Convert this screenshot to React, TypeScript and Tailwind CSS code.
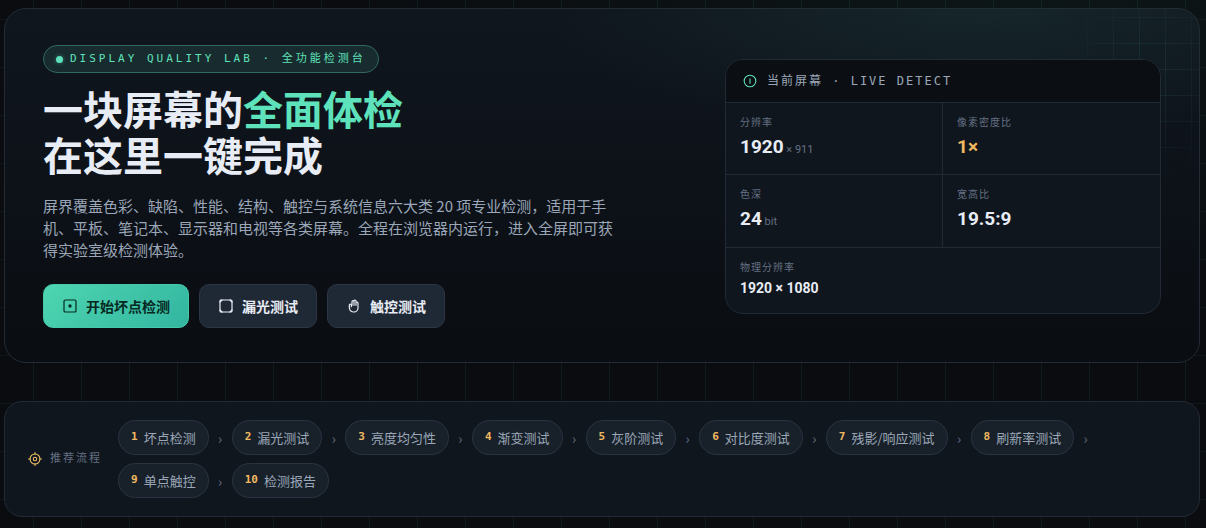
import type { ReactNode } from "react";

const MONO = "font-['DejaVu_Sans_Mono','Noto_Sans_CJK_SC',monospace]";
const NUM = "font-[Roboto,'Noto_Sans_CJK_SC',sans-serif]";

function Icon({ size, className, children }: { size: "sm" | "md"; className?: string; children: ReactNode }) {
  return (
    <svg
      viewBox="0 0 24 24"
      fill="none"
      stroke="currentColor"
      strokeWidth="1.8"
      strokeLinecap="round"
      strokeLinejoin="round"
      aria-hidden="true"
      className={`${size === "sm" ? "size-3.5" : "size-4"} shrink-0 ${className ?? ""}`}
    >
      {children}
    </svg>
  );
}

const actions = [
  {
    label: "开始坏点检测",
    primary: true,
    icon: (
      <>
        <rect x="3" y="3" width="18" height="18" rx="2" />
        <circle cx="12" cy="12" r="1.6" fill="currentColor" />
      </>
    ),
  },
  {
    label: "漏光测试",
    primary: false,
    icon: (
      <>
        <rect x="3" y="3" width="18" height="18" rx="1.5" />
        <path d="M3 6 6 3M18 3l3 3M21 18l-3 3M6 21l-3-3" />
      </>
    ),
  },
  {
    label: "触控测试",
    primary: false,
    icon: (
      <path d="M9 11V5.5a1.5 1.5 0 0 1 3 0V11m0-1V4.500a1.500 1.500 0 0 1 3 0V11m0-3.500a1.500 1.500 0 0 1 3 0V15a6 6 0 0 1-6 6h-1a6 6 0 0 1-5-3l-1-3v-4.500a1.500 1.500 0 0 1 3 0V13" />
    ),
  },
];

const steps = [
  "坏点检测",
  "漏光测试",
  "亮度均匀性",
  "渐变测试",
  "灰阶测试",
  "对比度测试",
  "残影/响应测试",
  "刷新率测试",
  "单点触控",
  "检测报告",
];

function Stat({ label, className, children }: { label: string; className?: string; children: ReactNode }) {
  return (
    <div className={`border-[#222a36] px-3.5 pt-3 ${className ?? ""}`}>
      <dt className={`${MONO} text-[10px] leading-4 tracking-[1px] text-[#647084]`}>{label}</dt>
      {children}
    </div>
  );
}

export default function App() {
  return (
    <div className="min-h-screen bg-[#0a0c10] bg-[radial-gradient(ellipse_700px_300px_at_85%_0%,rgba(40,110,85,0.1),transparent),linear-gradient(to_right,rgba(94,234,190,0.07)_1px,transparent_1px),linear-gradient(to_bottom,rgba(94,234,190,0.06)_1px,transparent_1px)] bg-[length:auto,48px_48px,48px_48px] bg-[position:0_0,33px_0,0_19px] font-['Noto_Sans_CJK_SC',sans-serif] text-[#e8ecf5]">
      <main className="flex flex-col gap-[38px] pt-2 pr-1.5 pb-[11px] pl-1">
        <section className="relative overflow-hidden rounded-[22px] border border-[#222b36] bg-[radial-gradient(ellipse_440px_130px_at_82%_0%,rgba(70,180,150,0.1),transparent),linear-gradient(to_bottom,#10161e,#0d1219_50%,#0a0d11)] px-[38px] pt-9 pb-[34px]">
          <div
            aria-hidden="true"
            className="absolute top-0 right-0 h-44 w-32 bg-[linear-gradient(to_right,rgba(94,234,190,0.08)_1px,transparent_1px),linear-gradient(to_bottom,rgba(94,234,190,0.08)_1px,transparent_1px)] [mask-image:radial-gradient(ellipse_at_60%_40%,black_20%,transparent_75%)] bg-[length:26px_26px] bg-[position:16px_8px]"
          />
          <div className="relative grid grid-cols-[1.5fr_1fr] items-center gap-7">
            <div>
              <div
                className={`${MONO} inline-flex h-7 items-center gap-[7px] rounded-full border border-[#2f6a5d] bg-[#182b2e] px-3 align-top text-[11px] tracking-[3px] text-[#5ee2bb]`}
              >
                <span className="size-[7px] rounded-full bg-[#5ee2bb] shadow-[0_0_4px_rgba(94,234,190,0.4)]" />
                <span>DISPLAY QUALITY LAB · 全功能检测台</span>
              </div>
              <h1 className="mt-3 text-[40px] leading-[46px] font-bold">
                一块屏幕的<span className="text-[#5ee2bb]">全面体检</span>
                <br />
                在这里一键完成
              </h1>
              <p className="mt-[18px] max-w-[576px] text-[15px] leading-[22px] text-[#9ba7b8]">
                屏界覆盖色彩、缺陷、性能、结构、触控与系统信息六大类 20
                项专业检测，适用于手机、平板、笔记本、显示器和电视等各类屏幕。全程在浏览器内运行，进入全屏即可获得实验室级检测体验。
              </p>
              <div className="mt-[23px] flex flex-wrap gap-2.5">
                {actions.map((a) => (
                  <button
                    key={a.label}
                    type="button"
                    className={`flex h-11 items-center gap-2 rounded-[10px] border px-[18px] text-sm font-bold ${
                      a.primary
                        ? "border-[#45c9ab] bg-linear-135 from-[#4dd6b0] to-[#33b5a0] text-[#06281f]"
                        : "border-[#2c3645] bg-[#1f2935] text-[#e8ecf5]"
                    }`}
                  >
                    <Icon size="md">{a.icon}</Icon>
                    {a.label}
                  </button>
                ))}
              </div>
            </div>

            <aside className="overflow-hidden rounded-[18px] border border-[#222a36] bg-[#10161d]">
              <h2
                className={`${MONO} flex h-[43px] items-center gap-2.5 border-b border-[#222a36] bg-[#0b0f14] px-[17px] text-xs tracking-[2px] text-[#9ba7b8]`}
              >
                <Icon size="sm" className="text-[#5ee2bb]">
                  <circle cx="12" cy="12" r="10" />
                  <path d="M12 8v8" />
                </Icon>
                <span>当前屏幕 · LIVE DETECT</span>
              </h2>
              <dl className="grid grid-cols-2">
                <Stat label="分辨率" className="h-[72px] border-r border-b">
                  <dd className={`${NUM} mt-0.5 text-[19px] leading-7 font-bold`}>
                    1920<span className="text-[11px] font-normal text-[#647084]"> × 911</span>
                  </dd>
                </Stat>
                <Stat label="像素密度比" className="h-[72px] border-b">
                  <dd className={`${NUM} mt-0.5 text-[19px] leading-7 font-bold text-[#f0b860]`}>1×</dd>
                </Stat>
                <Stat label="色深" className="h-[73px] border-r border-b">
                  <dd className={`${NUM} mt-0.5 text-[19px] leading-7 font-bold`}>
                    24<span className="text-[11px] font-normal text-[#647084]"> bit</span>
                  </dd>
                </Stat>
                <Stat label="宽高比" className="h-[73px] border-b">
                  <dd className={`${NUM} mt-0.5 text-[19px] leading-7 font-bold`}>19.5:9</dd>
                </Stat>
                <Stat label="物理分辨率" className="col-span-2 h-[65px]">
                  <dd className={`${NUM} text-sm leading-6 font-bold`}>1920 × 1080</dd>
                </Stat>
              </dl>
            </aside>
          </div>
        </section>

        <section className="flex items-center gap-4 rounded-[18px] border border-[#222a36] bg-[#10161d] py-[18px] pr-[22px] pl-[23px]">
          <h2 className={`${MONO} flex shrink-0 items-center gap-2 text-[11px] tracking-[2px] text-[#647084]`}>
            <Icon size="sm" className="text-[#f0c268]">
              <circle cx="12" cy="12" r="8.500" />
              <circle cx="12" cy="12" r="3" />
              <path d="M12 1v3M12 20v3M1 12h3M20 12h3" />
            </Icon>
            推荐流程
          </h2>
          <ol className="flex flex-wrap gap-2">
            {steps.map((s, i) => (
              <li key={s} className="flex items-center gap-2">
                <button
                  type="button"
                  className="flex h-[35px] items-center gap-1.5 rounded-full border border-[#2a3441] bg-[#18212a] px-3 text-[13px] text-[#9ba7b8]"
                >
                  <span className={`${MONO} text-[11px] font-bold text-[#f0b860]`}>{i + 1}</span>
                  {s}
                </button>
                {i < steps.length - 1 && (
                  <span aria-hidden="true" className="w-[7px] text-center text-sm text-[#647084]">
                    ›
                  </span>
                )}
              </li>
            ))}
          </ol>
        </section>
      </main>
    </div>
  );
}
